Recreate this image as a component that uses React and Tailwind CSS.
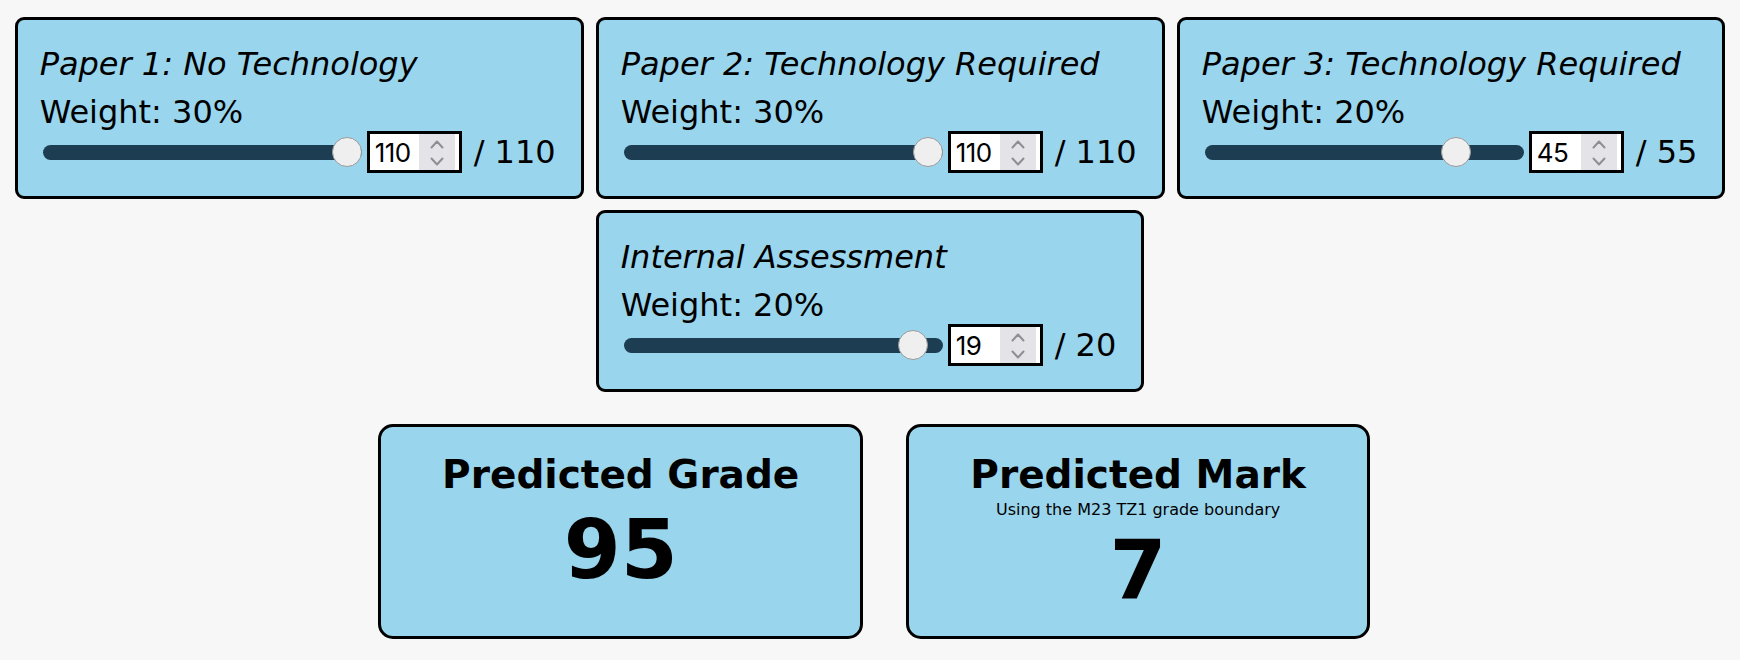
import { useState } from 'react';

const PAPERS = [
  { id: 'p1', title: 'Paper 1: No Technology', weight: 30, max: 110, initial: 110 },
  { id: 'p2', title: 'Paper 2: Technology Required', weight: 30, max: 110, initial: 110 },
  { id: 'p3', title: 'Paper 3: Technology Required', weight: 20, max: 55, initial: 45 },
  { id: 'ia', title: 'Internal Assessment', weight: 20, max: 20, initial: 19 },
];

// lowest percentage needed for each mark, 1..7
const BOUNDARIES = [0, 14, 27, 41, 53, 66, 79];

const NumberBox = ({ value, max, onChange }) => (
  <div className="ml-[5px] flex h-[42px] w-[95px] shrink-0 border-[3px] border-black bg-white">
    <input
      type="number"
      min={0}
      max={max}
      value={value}
      onChange={e => onChange(Math.max(0, Math.min(max, Number(e.target.value) || 0)))}
      className="h-full w-[49px] bg-white pl-[5px] font-['Inter',sans-serif] text-[26px] tracking-[-0.5px] text-black outline-none [appearance:textfield] [&::-webkit-inner-spin-button]:appearance-none [&::-webkit-outer-spin-button]:appearance-none"
    />
    <div className="flex w-[36px] items-center justify-center bg-[#e3e3e8]">
      <svg width="14" height="36" viewBox="0 0 14 36" fill="none" stroke="#8e8e93" strokeWidth="2" strokeLinecap="round" strokeLinejoin="round">
        <path d="M1.5 13.5 L7 7.5 L12.5 13.5" />
        <path d="M1.5 24.5 L7 30.5 L12.5 24.5" />
      </svg>
    </div>
  </div>
);

const PaperCard = ({ paper, value, onChange }) => (
  <div className="rounded-[9px] border-[3px] border-black bg-[#99d5ed] pt-[26px] pb-[23px] pl-[22px] pr-[25px]">
    <div className="whitespace-nowrap text-[32px] italic leading-[37px]">{paper.title}</div>
    <div className="mt-[11px] text-[32px] leading-[37px]">Weight: {paper.weight}%</div>
    <div className="flex h-[42px] items-center">
      <input
        type="range"
        min={0}
        max={paper.max}
        value={value}
        onChange={e => onChange(Number(e.target.value))}
        className="m-0 ml-[3px] h-[15px] w-[319px] shrink-0 cursor-pointer appearance-none rounded-full bg-[#1c3d52] outline-none [&::-webkit-slider-thumb]:box-border [&::-webkit-slider-thumb]:h-[30px] [&::-webkit-slider-thumb]:w-[30px] [&::-webkit-slider-thumb]:appearance-none [&::-webkit-slider-thumb]:rounded-full [&::-webkit-slider-thumb]:border-[1.5px] [&::-webkit-slider-thumb]:border-solid [&::-webkit-slider-thumb]:border-[#9a9a9a] [&::-webkit-slider-thumb]:bg-[#efefef]"
      />
      <NumberBox value={value} max={paper.max} onChange={onChange} />
      <span className="ml-[12px] whitespace-nowrap text-[32px] leading-[37px]">/ {paper.max}</span>
    </div>
  </div>
);

export default function App() {
  const [marks, setMarks] = useState(() => Object.fromEntries(PAPERS.map(p => [p.id, p.initial])));
  const setMark = id => v => setMarks(m => ({ ...m, [id]: v }));

  const grade = Math.round(PAPERS.reduce((sum, p) => sum + (marks[p.id] / p.max) * p.weight, 0));
  const mark = BOUNDARIES.filter(b => grade >= b).length;

  return (
    <div className="min-h-screen bg-[#f7f7f7] pt-[17px] font-['DejaVu_Sans',Verdana,sans-serif] text-black">
      <div className="flex justify-center gap-[12px]">
        {PAPERS.slice(0, 3).map(p => (
          <PaperCard key={p.id} paper={p} value={marks[p.id]} onChange={setMark(p.id)} />
        ))}
      </div>

      <div className="mt-[11px] flex justify-center">
        <PaperCard paper={PAPERS[3]} value={marks.ia} onChange={setMark('ia')} />
      </div>

      <div className="mt-[32px] flex justify-center gap-[43px] pl-[8px]">
        <div className="h-[215px] rounded-[15px] border-[3px] border-black bg-[#99d5ed] px-[61px] pt-[25px] text-center">
          <div className="whitespace-nowrap text-[39px] font-bold leading-[45px]">Predicted Grade</div>
          <div className="mt-[5px] text-[82px] font-bold leading-[95px]">{grade}</div>
        </div>
        <div className="h-[215px] rounded-[15px] border-[3px] border-black bg-[#99d5ed] px-[61px] pt-[25px] text-center">
          <div className="whitespace-nowrap text-[39px] font-bold leading-[45px]">Predicted Mark</div>
          <div className="mt-[3px] text-[16px] leading-[19px]">Using the M23 TZ1 grade boundary</div>
          <div className="mt-[4px] text-[82px] font-bold leading-[95px]">{mark}</div>
        </div>
      </div>
    </div>
  );
}
